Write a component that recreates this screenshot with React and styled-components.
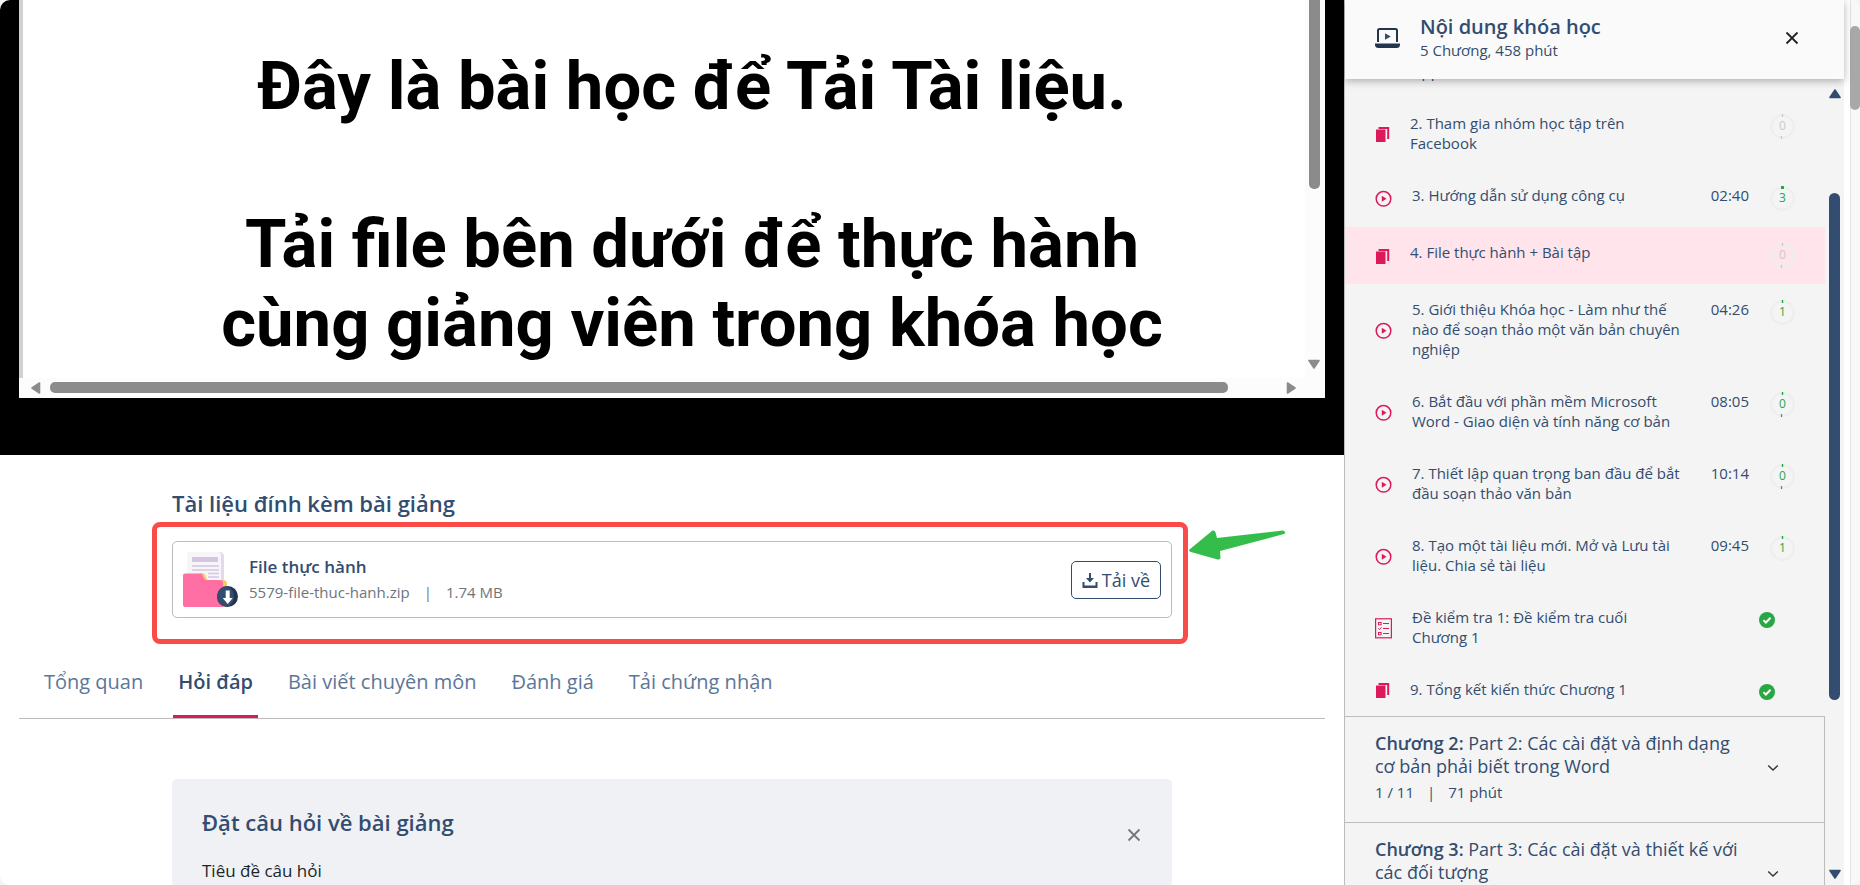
import { useEffect, useRef } from 'react';
import styled, { createGlobalStyle, css } from 'styled-components';

const GlobalStyle = createGlobalStyle`
  * {
    box-sizing: border-box;
  }
  body {
    margin: 0;
    background: #f4f4f4;
    color: #324d6f;
    font-family: 'Open Sans', 'Noto Sans', sans-serif;
    font-size: 15px;
  }
  h1, h2, h3, p, ul {
    margin: 0;
    padding: 0;
  }
  button {
    border: none;
    background: none;
    padding: 0;
    font-family: inherit;
    color: inherit;
    cursor: pointer;
  }
  svg {
    display: block;
    flex-shrink: 0;
  }
`;

// Page shell
const Page = styled.div`
  display: flex;
  height: 100vh;
  overflow: hidden;
  background: white;
  border-radius: 10px;
`;
const Main = styled.main`
  flex: 1;
  min-width: 0;
`;
const PageScroll = styled.div`
  width: 10px;
  margin-left: 6px;
  padding-top: 26px;
  background: #f8f8f8;
  box-shadow: inset 1px 0 #e3e3e3;
`;
const PageThumb = styled.div`
  height: 84px;
  border-radius: 5px;
  background: #a8a8a8;
`;

// Lesson document viewer
const Viewer = styled.section`
  height: 455px;
  padding: 0 19px 57px;
  background: black;
`;
const Frame = styled.div`
  display: flex;
  flex-direction: column;
  height: 100%;
  background: #fcfcfc;
`;
const FrameBody = styled.div`
  display: flex;
  flex: 1;
  min-height: 0;
`;
const Slide = styled.div`
  flex: 1;
  padding: 47px 0 0 56px;
  overflow: hidden;
  background: white;
  border-left: 4px solid #d3d0d0;
  color: black;
  font-family: Roboto, sans-serif;
  font-size: 67px;
  font-weight: 700;
  line-height: 79px;
  text-align: center;
  white-space: nowrap;
`;
const SlideLine = styled.p`
  & + & {
    margin-top: 79px;
  }
`;
const VBar = styled.div`
  display: flex;
  flex-direction: column;
  align-items: center;
  justify-content: space-between;
  width: 20px;
  padding: 0 2px 8px 0;
`;
const VThumb = styled.div`
  width: 11px;
  height: 189px;
  border-radius: 0 0 5px 5px;
  background: #8b8b8b;
`;
const HBar = styled.div`
  display: flex;
  align-items: center;
  gap: 8px;
  height: 20px;
  padding: 0 28px 1px 11px;
`;
const HTrack = styled.div`
  flex: 1;
`;
const HThumb = styled.div`
  width: 96%;
  height: 11px;
  border-radius: 5px;
  background: #8b8b8b;
`;

// Attachments
const Content = styled.section`
  max-width: 1000px;
  margin: 0 auto;
`;
const SectionTitle = styled.h2`
  font-size: 22px;
  font-weight: 600;
  line-height: 30px;
`;
const Attachments = styled(Content)`
  padding-top: 33px;
`;
const Highlight = styled.div`
  position: relative;
  margin-top: 23px;
`;
const RedFrame = styled.div`
  position: absolute;
  inset: -19px -16px -26px -20px;
  border: 5px solid #f94c48;
  border-radius: 8px;
  pointer-events: none;
`;
const Pointer = styled.svg`
  position: absolute;
  left: 100%;
  top: -12px;
  margin-left: 16px;
`;
const FileCard = styled.div`
  display: flex;
  align-items: center;
  gap: 11px;
  height: 77px;
  padding: 0 10px;
  border: 1px solid #bcbcbc;
  border-radius: 5px;
`;
const FileInfo = styled.div`
  flex: 1;
  padding-bottom: 2px;
`;
const FileName = styled.h3`
  font-size: 17px;
  font-weight: 600;
  line-height: 26px;
`;
const FileMeta = styled.p`
  display: flex;
  gap: 14px;
  color: #6c757d;
  font-size: 15px;
  line-height: 24px;
`;
const DownloadButton = styled.button`
  display: flex;
  align-items: center;
  gap: 4px;
  height: 38px;
  padding: 0 10px;
  border: 1px solid #324d6f;
  border-radius: 5px;
  font-size: 18px;
`;

// Tabs
const Tabs = styled.nav`
  display: flex;
  gap: 25px;
  margin: 25px 19px 0;
  padding-left: 20px;
  border-bottom: 1px solid #bcbcbc;
`;
const Tab = styled.button`
  height: 75px;
  padding: 4px 5px 0;
  border-bottom: 3px solid ${p => (p.$active ? '#dc1a5b' : 'transparent')};
  color: ${p => (p.$active ? '#324d6f' : '#5c7699')};
  font-size: 20px;
  font-weight: ${p => (p.$active ? 600 : 400)};
`;

// Question form
const Question = styled(Content)`
  margin-top: 60px;
  padding: 28px 30px;
  background: #f0f1f5;
  border-radius: 5px;
`;
const QuestionHead = styled.div`
  display: flex;
  justify-content: space-between;
  align-items: flex-end;
  height: 36px;
  margin-bottom: 16px;
  ${SectionTitle} {
    align-self: flex-start;
  }
`;
const Field = styled.label`
  display: block;
  color: #212529;
  font-size: 17px;
  line-height: 24px;
`;
const Input = styled.input`
  display: block;
  width: 100%;
  height: 40px;
  margin-top: 8px;
  border: 1px solid #bcbcbc;
  border-radius: 5px;
`;
const CloseButton = styled.button`
  padding: 1px;
  color: ${p => p.$color};
`;

// Course sidebar
const Sidebar = styled.aside`
  display: flex;
  flex-direction: column;
  width: 500px;
  border-left: 1px solid #bcbcbc;
  background: #f4f4f4;
`;
const SideHead = styled.header`
  position: relative;
  display: flex;
  align-items: center;
  height: 79px;
  padding: 0 44px 3px 30px;
  background: #fafafa;
  box-shadow: 0 2px 8px rgba(0, 0, 0, 0.3);
`;
const SideTitles = styled.div`
  flex: 1;
  margin-left: 20px;
`;
const SideTitle = styled.h2`
  font-size: 20px;
  font-weight: 600;
  line-height: 24px;
`;
const SideSub = styled.p`
  font-size: 15px;
  line-height: 22px;
`;
const SideBody = styled.div`
  display: flex;
  flex: 1;
  min-height: 0;
`;
const Lessons = styled.div`
  flex: 1;
  overflow: hidden;
`;
const LessonList = styled.ul`
  list-style: none;
`;
const Lesson = styled.li`
  display: flex;
  align-items: center;
  padding: 16px 30px;
  line-height: 20px;
  background: ${p => (p.$active ? '#ffe4ec' : 'transparent')};
`;
const LessonIcon = styled.span`
  width: ${p => (p.$wide ? 37 : 35)}px;
`;
const LessonName = styled.a`
  flex: 1;
  align-self: flex-start;
  margin: -1px 0 1px;
  color: inherit;
  font-size: 15px;
  text-decoration: none;
  white-space: pre-line;
`;
const LessonTime = styled.span`
  align-self: flex-start;
  margin: -1px 0 1px;
  font-size: 15px;
`;
const Status = styled.span`
  align-self: flex-start;
  ${p =>
    p.$done
      ? css`
          width: 16px;
          margin: 4px 20px 0 0;
        `
      : css`
          width: 25px;
          margin-left: 21px;
        `}
`;
const Chapter = styled.button`
  display: flex;
  align-items: center;
  width: 100%;
  height: 106px;
  padding: 0 45px 3px 30px;
  border-top: 1px solid #bcbcbc;
  border-right: 1px solid #bcbcbc;
  text-align: left;
`;
const ChapterText = styled.span`
  flex: 1;
`;
const ChapterTitle = styled.span`
  display: block;
  margin-bottom: 3px;
  font-size: 18px;
  line-height: 23px;
  white-space: pre-line;
  b {
    font-weight: 600;
  }
`;
const ChapterMeta = styled.span`
  display: flex;
  gap: 13px;
  font-size: 15px;
  line-height: 23px;
`;
const SideScroll = styled.div`
  display: flex;
  flex-direction: column;
  align-items: center;
  width: 19px;
  padding: 9px 0 5px;
`;
const SideTrack = styled.div`
  flex: 1;
  display: flex;
  justify-content: center;
  padding: 93px 0 168px;
`;
const SideThumb = styled.div`
  width: 11px;
  border-radius: 6px;
  background: #324d6f;
`;

const ROTATE = { up: 0, right: 90, down: 180, left: 270 };

const Triangle = ({ dir, color }) => (
  <svg width='12' height='12' viewBox='0 0 12 12'>
    <path
      d='M6 2 11 9.5H1z'
      fill={color}
      stroke={color}
      strokeWidth='1.6'
      strokeLinejoin='round'
      transform={`rotate(${ROTATE[dir]} 6 6)`}
    />
  </svg>
);

const CloseIcon = () => (
  <svg width='14' height='14' viewBox='0 0 14 14' stroke='currentColor' strokeWidth='1.8'>
    <path d='M1.5 1.5l11 11M12.5 1.5l-11 11' />
  </svg>
);

const LaptopIcon = () => (
  <svg width='25' height='20' viewBox='0 0 25 20'>
    <path d='M3 14V2.5Q3 1 4.5 1h16Q22 1 22 2.5V14' fill='none' stroke='#23344f' strokeWidth='2' />
    <path d='M10 5.2v6.6l5.8-3.3z' fill='#324d6f' />
    <path d='M0 15.5h25v1Q25 20 21.5 20h-18Q0 20 0 16.5z' fill='#23344f' />
  </svg>
);

const PlayIcon = () => (
  <svg width='17' height='17' viewBox='0 0 17 17'>
    <circle cx='8.5' cy='8.8' r='7.3' fill='none' stroke='#dc1a5b' strokeWidth='1.5' />
    <path d='M6.8 5.8v6l4.7-3z' fill='#dc1a5b' />
  </svg>
);

const DocIcon = () => (
  <svg width='15' height='16' viewBox='0 0 15 16' fill='#dc1a5b'>
    <path d='M1 3.5h9.5V16H1z' />
    <path d='M3.5 1H14.2V13H12.2V3H3.500z' />
  </svg>
);

const QuizIcon = () => (
  <svg width='17' height='21' viewBox='0 0 17 21' fill='none' stroke='#dc1a5b'>
    <rect x='.6' y='.8' width='15.8' height='19' strokeWidth='1.2' />
    <path d='M8 5.5h6M8 10.5h6M8 15.5h6' />
    <rect x='3.5' y='4.5' width='2.6' height='2.3' />
    <path d='M3.3 10.3l1.2 1.2 2-2.2' />
    <rect x='3.5' y='14.5' width='2.6' height='2.3' />
  </svg>
);

const CheckIcon = () => (
  <svg width='16' height='16' viewBox='0 0 16 16'>
    <circle cx='8' cy='8' r='8' fill='#28a745' />
    <path d='M4.5 8.2l2.4 2.3 4.6-4.7' fill='none' stroke='white' strokeWidth='2' />
  </svg>
);

const ChevronIcon = () => (
  <svg width='12' height='8' viewBox='0 0 12 8'>
    <path d='M1.2 1.5 6 6l4.8-4.5' fill='none' stroke='#333' strokeWidth='1.4' />
  </svg>
);

const DownloadIcon = () => (
  <svg width='16' height='16' viewBox='0 0 16 16' fill='#324d6f'>
    <path d='M7 1h2v5h3L8 10.500 4 6h3z' />
    <path d='M.5 10h2V13.500h11V10h2V16H.5z' />
  </svg>
);

const FolderIcon = () => (
  <svg width='55' height='55' viewBox='0 0 55 55'>
    <path d='M34 0h3.5Q41 1 41 4.5V30H34z' fill='#e3d9ec' />
    <path d='M6 0h29Q38 0 38 3.5V30H4V2Q4 0 6 0z' fill='#f6f6f8' />
    <path d='M9 5h26v5H9z' fill='#d5c5e3' />
    <path d='M9 14h27M9 18h27M25 21.5h11M25 25h11' stroke='#d5c5e3' strokeWidth='1.4' />
    <path d='M16 21h3Q22 21 23 25l1.500 3H40Q44 28 44 32V55H36z' fill='#f5cb6a' />
    <path
      d='M2 21.5h15Q19 21.5 20 24l1 2.500Q22 28 24 28h13Q40 28 40 31V55H2Q0 55 0 53V23.500Q0 21.500 2 21.500z'
      fill='#ff6fa3'
    />
    <circle cx='44.5' cy='44.5' r='10.5' fill='#23344f' />
    <path d='M44.5 34a10.5 10.5 0 0 0 0 21Q51 51 51 44.5T44.5 34z' fill='#324d6f' />
    <path d='M42.700 38.500h4v7.500h3L44.700 52 39.700 46h3z' fill='white' />
  </svg>
);

const Ring = ({ count, muted }) => {
  const color = muted ? '#cacaca' : '#28a745';
  return (
    <svg width='25' height='25' viewBox='0 0 25 25'>
      <circle cx='12.5' cy='12.5' r='11.3' fill='none' stroke='#eee' strokeWidth='2.4' />
      <path d='M12.5 0v3' stroke={color} strokeWidth={count === 3 ? 3 : 1.4} />
      {count === 0 && <path d='M11.5 22v3' stroke={color} strokeWidth='1.2' />}
      <text x='12.5' y='16' fill={color} fontSize='12' textAnchor='middle'>
        {count}
      </text>
    </svg>
  );
};

const ICONS = { play: PlayIcon, doc: DocIcon, quiz: QuizIcon };

const lessons = [
  { icon: 'play', name: '1. Hướng dẫn học tập trên\nApp', count: 0 },
  { icon: 'doc', name: '2. Tham gia nhóm học tập trên\nFacebook', count: 0, muted: true },
  { icon: 'play', name: '3. Hướng dẫn sử dụng công cụ', time: '02:40', count: 3 },
  { icon: 'doc', name: '4. File thực hành + Bài tập', count: 0, muted: true, active: true },
  {
    icon: 'play',
    name: '5. Giới thiệu Khóa học - Làm như thế\nnào để soạn thảo một văn bản chuyên\nnghiệp',
    time: '04:26',
    count: 1,
  },
  {
    icon: 'play',
    name: '6. Bắt đầu với phần mềm Microsoft\nWord - Giao diện và tính năng cơ bản',
    time: '08:05',
    count: 0,
  },
  {
    icon: 'play',
    name: '7. Thiết lập quan trọng ban đầu để bắt\nđầu soạn thảo văn bản',
    time: '10:14',
    count: 0,
  },
  {
    icon: 'play',
    name: '8. Tạo một tài liệu mới. Mở và Lưu tài\nliệu. Chia sẻ tài liệu',
    time: '09:45',
    count: 1,
  },
  { icon: 'quiz', name: 'Đề kiểm tra 1: Đề kiểm tra cuối\nChương 1', done: true },
  { icon: 'doc', name: '9. Tổng kết kiến thức Chương 1', done: true },
];

const chapters = [
  {
    label: 'Chương 2:',
    name: 'Part 2: Các cài đặt và định dạng\ncơ bản phải biết trong Word',
    progress: '1 / 11',
    length: '71 phút',
  },
  {
    label: 'Chương 3:',
    name: 'Part 3: Các cài đặt và thiết kế với\ncác đối tượng',
    progress: '0 / 11',
    length: '80 phút',
  },
];

const tabs = ['Tổng quan', 'Hỏi đáp', 'Bài viết chuyên môn', 'Đánh giá', 'Tải chứng nhận'];

const CourseSidebar = () => {
  const listRef = useRef(null);
  useEffect(() => {
    listRef.current.scrollTop = 53;
  }, []);

  return (
    <Sidebar>
      <SideHead>
        <LaptopIcon />
        <SideTitles>
          <SideTitle>Nội dung khóa học</SideTitle>
          <SideSub>5 Chương, 458 phút</SideSub>
        </SideTitles>
        <CloseButton $color='#222' aria-label='Đóng'>
          <CloseIcon />
        </CloseButton>
      </SideHead>
      <SideBody>
        <Lessons ref={listRef}>
          <LessonList>
            {lessons.map(item => {
              const Icon = ICONS[item.icon];
              return (
                <Lesson key={item.name} $active={item.active}>
                  <LessonIcon $wide={item.icon !== 'doc'}>
                    <Icon />
                  </LessonIcon>
                  <LessonName href='#'>{item.name}</LessonName>
                  {item.time && <LessonTime>{item.time}</LessonTime>}
                  <Status $done={item.done}>
                    {item.done ? <CheckIcon /> : <Ring count={item.count} muted={item.muted} />}
                  </Status>
                </Lesson>
              );
            })}
          </LessonList>
          {chapters.map(item => (
            <Chapter key={item.label}>
              <ChapterText>
                <ChapterTitle>
                  <b>{item.label}</b> {item.name}
                </ChapterTitle>
                <ChapterMeta>
                  <span>{item.progress}</span>
                  <span>|</span>
                  <span>{item.length}</span>
                </ChapterMeta>
              </ChapterText>
              <ChevronIcon />
            </Chapter>
          ))}
        </Lessons>
        <SideScroll>
          <Triangle dir='up' color='#324d6f' />
          <SideTrack>
            <SideThumb />
          </SideTrack>
          <Triangle dir='down' color='#324d6f' />
        </SideScroll>
      </SideBody>
    </Sidebar>
  );
};

const App = () => {
  return (
    <>
      <GlobalStyle />
      <Page>
        <Main>
          <Viewer>
            <Frame>
              <FrameBody>
                <Slide>
                  <SlideLine>Đây là bài học để Tải Tài liệu.</SlideLine>
                  <SlideLine>
                    Tải file bên dưới để thực hành
                    <br />
                    cùng giảng viên trong khóa học
                  </SlideLine>
                </Slide>
                <VBar>
                  <VThumb />
                  <Triangle dir='down' color='#8b8b8b' />
                </VBar>
              </FrameBody>
              <HBar>
                <Triangle dir='left' color='#8b8b8b' />
                <HTrack>
                  <HThumb />
                </HTrack>
                <Triangle dir='right' color='#8b8b8b' />
              </HBar>
            </Frame>
          </Viewer>

          <Attachments>
            <SectionTitle>Tài liệu đính kèm bài giảng</SectionTitle>
            <Highlight>
              <FileCard>
                <FolderIcon />
                <FileInfo>
                  <FileName>File thực hành</FileName>
                  <FileMeta>
                    <span>5579-file-thuc-hanh.zip</span>
                    <span>|</span>
                    <span>1.74 MB</span>
                  </FileMeta>
                </FileInfo>
                <DownloadButton>
                  <DownloadIcon />
                  Tải về
                </DownloadButton>
              </FileCard>
              <RedFrame />
              <Pointer width='98' height='33' viewBox='0 0 98 33'>
                <path
                  d='M1.5 20.5 24.5 1.5Q27 1 27.5 3.500L29 9 95 1.5Q99 3 96 5L32 22l.5 7Q32 31 29.500 30.500L3 23Q0 22 1.500 20.500z'
                  fill='#34bd4b'
                />
              </Pointer>
            </Highlight>
          </Attachments>

          <Tabs>
            {tabs.map(tab => (
              <Tab key={tab} $active={tab === 'Hỏi đáp'}>
                {tab}
              </Tab>
            ))}
          </Tabs>

          <Question>
            <QuestionHead>
              <SectionTitle>Đặt câu hỏi về bài giảng</SectionTitle>
              <CloseButton $color='#777' aria-label='Đóng'>
                <CloseIcon />
              </CloseButton>
            </QuestionHead>
            <Field>
              Tiêu đề câu hỏi
              <Input type='text' />
            </Field>
          </Question>
        </Main>
        <CourseSidebar />
        <PageScroll>
          <PageThumb />
        </PageScroll>
      </Page>
    </>
  );
};

export default App;
